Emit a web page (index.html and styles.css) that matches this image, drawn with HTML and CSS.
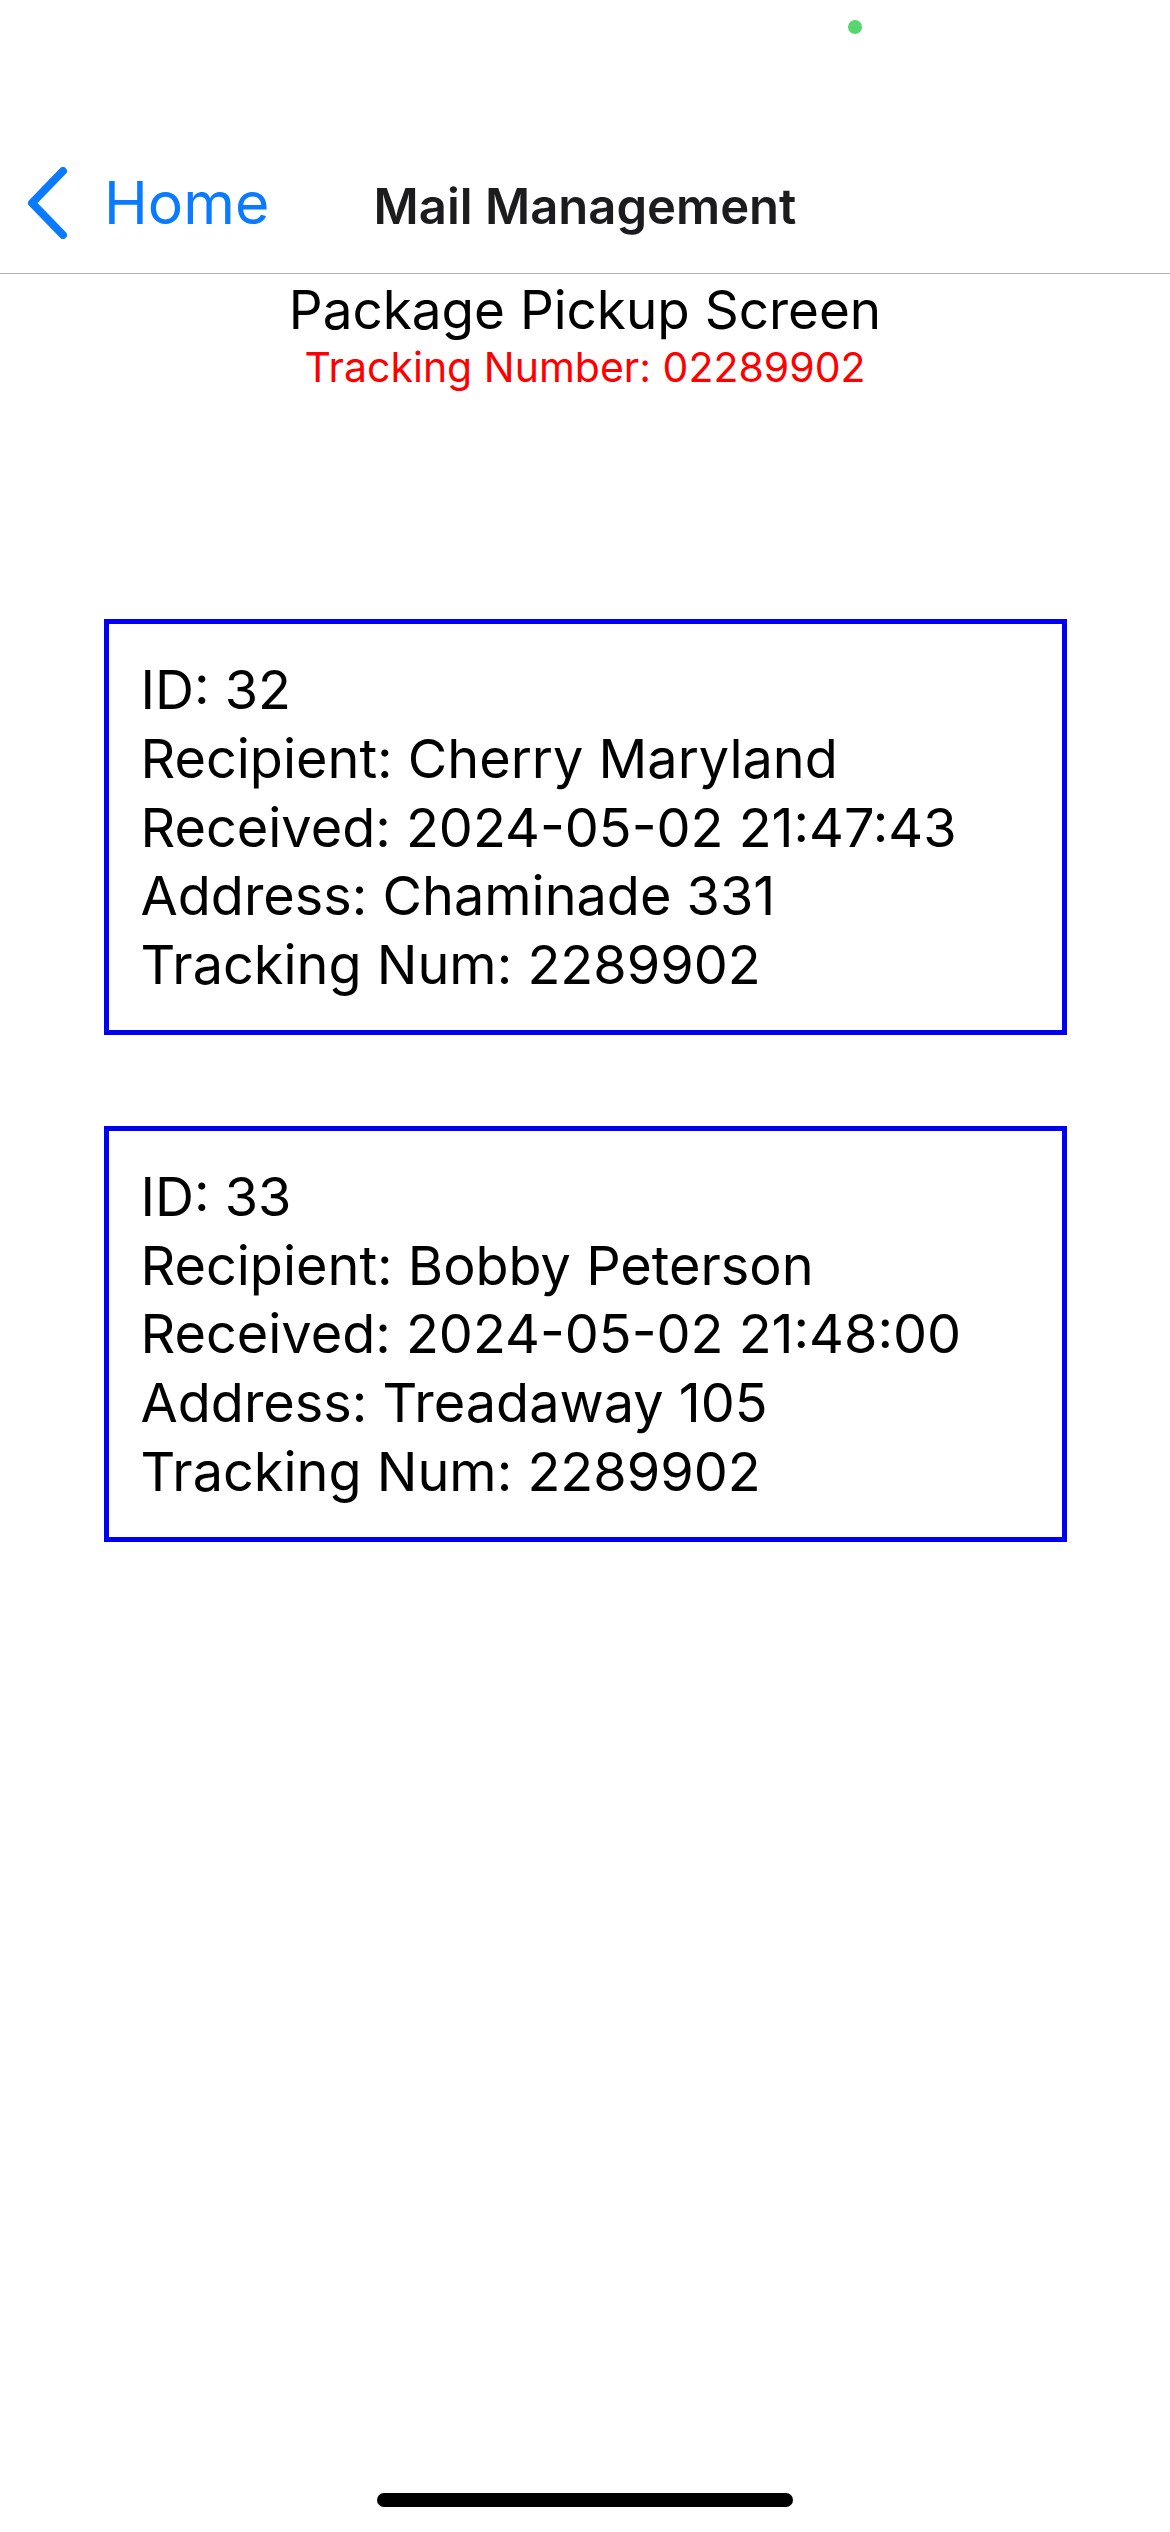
FILE: index.html
```html
<!DOCTYPE html>
<html lang="en">
<head>
<meta charset="utf-8">
<title>Mail Management</title>
<link rel="stylesheet" href="styles.css">
</head>
<body>
<div class="screen">
  <div class="status">
    <span class="dot"></span>
  </div>
  <nav class="nav">
    <a class="back" href="#">
      <svg class="chev" width="44" height="72" viewBox="0 0 44 72" aria-hidden="true">
        <polyline points="37,4 6,36 37,68" fill="none" stroke="#0a7aff" stroke-width="8" stroke-linecap="round" stroke-linejoin="round"/>
      </svg>
      <span class="back-label">Home</span>
    </a>
    <div class="nav-title">Mail Management</div>
    <div class="nav-spacer"></div>
  </nav>
  <header class="heading">
    <h1 class="title">Package Pickup Screen</h1>
    <p class="tracking">Tracking Number: 02289902</p>
  </header>
  <main class="list">
    <section class="card">
      <p>ID: 32</p>
      <p>Recipient: Cherry Maryland</p>
      <p>Received: 2024-05-02 21:47:43</p>
      <p>Address: Chaminade 331</p>
      <p>Tracking Num: 2289902</p>
    </section>
    <section class="card">
      <p>ID: 33</p>
      <p>Recipient: Bobby Peterson</p>
      <p>Received: 2024-05-02 21:48:00</p>
      <p>Address: Treadaway 105</p>
      <p>Tracking Num: 2289902</p>
    </section>
  </main>
  <div class="home-bar"><span class="indicator"></span></div>
</div>
</body>
</html>
```
FILE: styles.css
```css
html, body {
  margin: 0;
  padding: 0;
  background: #ffffff;
}
body {
  font-family: Inter, "Liberation Sans", Arial, sans-serif;
  color: #000;
}
.screen {
  width: 1170px;
  height: 2532px;
  display: flex;
  flex-direction: column;
  overflow: hidden;
}
.status {
  height: 140px;
  box-sizing: border-box;
  padding: 20px 0 0 848px;
}
.dot {
  display: block;
  width: 14px;
  height: 14px;
  border-radius: 50%;
  background: #58d56e;
}
.nav {
  height: 134px;
  box-sizing: border-box;
  border-bottom: 1.5px solid #b4b4b4;
  display: grid;
  grid-template-columns: 1fr auto 1fr;
  align-items: center;
  padding-bottom: 8px;
}
.back {
  display: flex;
  align-items: center;
  text-decoration: none;
  color: #0a7aff;
  padding-left: 26px;
}
.chev {
  display: block;
}
.back-label {
  font-size: 59px;
  margin-left: 34px;
  line-height: 1;
}
.nav-title {
  font-size: 49px;
  font-weight: 600;
  color: #1c1c1e;
  margin-top: 8px;
}
.heading {
  text-align: center;
  padding-top: 5px;
}
.title {
  margin: 0;
  font-size: 53px;
  font-weight: 400;
  line-height: 63px;
}
.tracking {
  margin: 0;
  font-size: 41px;
  line-height: 50px;
  color: #ff0000;
}
.list {
  display: flex;
  flex-direction: column;
  align-items: center;
  gap: 91px;
  padding-top: 227px;
  flex: 1;
}
.card {
  width: 963px;
  box-sizing: border-box;
  border: 5px solid #0000f5;
  padding: 32px 32px 30px;
}
.card p {
  margin: 0;
  font-size: 54px;
  line-height: 68.75px;
}
.home-bar {
  height: 39px;
  display: flex;
  justify-content: center;
}
.indicator {
  display: block;
  width: 416px;
  height: 14px;
  border-radius: 7px;
  background: #000;
}
```
